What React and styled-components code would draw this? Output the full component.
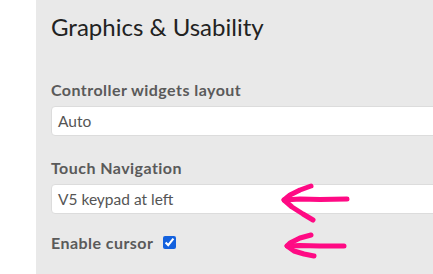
import React from "react";
import styled, { createGlobalStyle } from "styled-components";

const Global = createGlobalStyle`
  html, body { margin: 0; padding: 0; background: #fff; overflow: hidden; }
  body { width: 433px; height: 274px; font-family: Lato, "Open Sans", sans-serif; }
`;

const Page = styled.div`
  position: relative;
  display: flex;
  width: 433px;
  height: 274px;
  overflow: hidden;
`;

const Gutter = styled.div`
  flex: 0 0 36px;
  background: #fff;
`;

const Panel = styled.div`
  flex: 0 0 520px;
  background: #e9e9e9;
  padding: 12px 15px 0 15px;
  box-sizing: border-box;
  display: flex;
  flex-direction: column;
`;

const Title = styled.h2`
  margin: 0 0 39px 0;
  font-size: 24px;
  line-height: 29px;
  font-weight: 400;
  color: #222;
`;

const Field = styled.div`
  display: flex;
  flex-direction: column;
  margin-bottom: ${(p) => p.$gap || 0}px;
`;

const Label = styled.label`
  font-size: 16px;
  line-height: 19px;
  letter-spacing: 0.45px;
  font-weight: 700;
  color: #5a5a5a;
  margin-bottom: 7px;
`;

const Box = styled.div`
  height: 30px;
  box-sizing: border-box;
  background: #fff;
  border: 1px solid #dcdcdc;
  border-radius: 4px;
  padding: 0 6px;
  display: flex;
  align-items: center;
  font-size: 15.5px;
  color: #555;
`;

const CheckRow = styled.div`
  display: flex;
  align-items: center;
  gap: 10px;
`;

const CheckLabel = styled.span`
  font-size: 16px;
  line-height: 19px;
  letter-spacing: 0.45px;
  font-weight: 700;
  color: #5a5a5a;
`;

const Check = styled.input`
  width: 13px;
  height: 13px;
  margin: 0;
  accent-color: #1361de;
`;

const Overlay = styled.svg`
  position: absolute;
  left: 0;
  top: 0;
  pointer-events: none;
`;

export default function App() {
  return (
    <Page>
      <Global />
      <Gutter />
      <Panel>
        <Title>Graphics &amp; Usability</Title>
        <Field $gap={22}>
          <Label>Controller widgets layout</Label>
          <Box>Auto</Box>
        </Field>
        <Field $gap={19}>
          <Label>Touch Navigation</Label>
          <Box>V5 keypad at left</Box>
        </Field>
        <CheckRow>
          <CheckLabel>Enable cursor</CheckLabel>
          <Check type="checkbox" defaultChecked readOnly />
        </CheckRow>
      </Panel>
      <Overlay width="433" height="274" viewBox="0 0 433 274">
        <g fill="none" stroke="#ff0a84" strokeWidth="5" strokeLinecap="round" strokeLinejoin="round">
          <path d="M347 199 L320 199.5 L300 199 L284 200" />
          <path d="M311 186 L300 190 L290 195 L284 200 L292 207 L303 214 L313 220" />
          <path d="M344 246 L320 246 L300 245.5 L287 246" />
          <path d="M311 235 L300 238 L290 243 L287 246 L294 251 L304 254 L314 256" />
        </g>
      </Overlay>
    </Page>
  );
}
